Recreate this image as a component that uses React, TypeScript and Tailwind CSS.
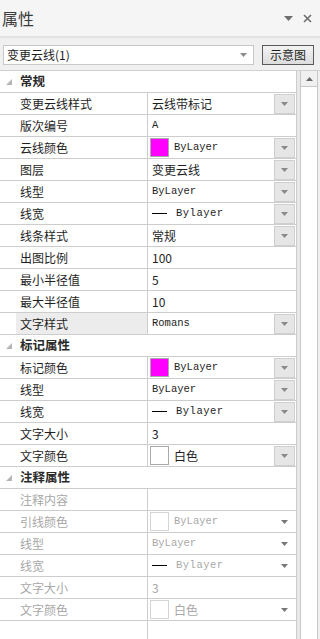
import React from "react";

type Kind = "text" | "drop" | "color" | "line";

type Row = {
  label: string;
  value?: string;
  kind?: Kind;
  color?: string;
  mono?: boolean;
  selected?: boolean;
};

type Section = {
  title: string;
  disabled?: boolean;
  rows: Row[];
};

const sections: Section[] = [
  {
    title: "常规",
    rows: [
      { label: "变更云线样式", value: "云线带标记", kind: "drop" },
      { label: "版次编号", value: "A", kind: "text", mono: true },
      { label: "云线颜色", value: "ByLayer", kind: "color", color: "#ff00ff", mono: true },
      { label: "图层", value: "变更云线", kind: "drop" },
      { label: "线型", value: "ByLayer", kind: "drop", mono: true },
      { label: "线宽", value: "Bylayer", kind: "line", mono: true },
      { label: "线条样式", value: "常规", kind: "drop" },
      { label: "出图比例", value: "100", kind: "text" },
      { label: "最小半径值", value: "5", kind: "text" },
      { label: "最大半径值", value: "10", kind: "text" },
      { label: "文字样式", value: "Romans", kind: "drop", mono: true, selected: true },
    ],
  },
  {
    title: "标记属性",
    rows: [
      { label: "标记颜色", value: "ByLayer", kind: "color", color: "#ff00ff", mono: true },
      { label: "线型", value: "ByLayer", kind: "drop", mono: true },
      { label: "线宽", value: "Bylayer", kind: "line", mono: true },
      { label: "文字大小", value: "3", kind: "text" },
      { label: "文字颜色", value: "白色", kind: "color", color: "#ffffff" },
    ],
  },
  {
    title: "注释属性",
    disabled: true,
    rows: [
      { label: "注释内容", value: "", kind: "text" },
      { label: "引线颜色", value: "ByLayer", kind: "color", color: "#ffffff", mono: true },
      { label: "线型", value: "ByLayer", kind: "drop", mono: true },
      { label: "线宽", value: "Bylayer", kind: "line", mono: true },
      { label: "文字大小", value: "3", kind: "text" },
      { label: "文字颜色", value: "白色", kind: "color", color: "#ffffff" },
    ],
  },
];

const Arrow = ({ up = false, className = "" }: { up?: boolean; className?: string }) => (
  <svg width="7" height="4" viewBox="0 0 7 4" className={className}>
    {up ? <path d="M0 4 L3.5 0 L7 4 Z" fill="currentColor" /> : <path d="M0 0 H7 L3.5 4 Z" fill="currentColor" />}
  </svg>
);

const DropButton = ({ disabled }: { disabled?: boolean }) =>
  disabled ? (
    <div className="w-[21px] h-[20px] flex items-center justify-center text-[#777]">
      <Arrow />
    </div>
  ) : (
    <div className="w-[21px] h-[20px] flex items-center justify-center bg-[#e6e6e6] border border-[#cfcfcf] text-[#8a8a8a]">
      <Arrow />
    </div>
  );

const PropRow = ({ row, disabled }: { row: Row; disabled?: boolean }) => {
  const textColor = disabled ? "text-[#a8a8a8]" : "text-[#1e1e1e]";
  const valueFont = row.mono ? "font-['Liberation_Mono',monospace] text-[10.5px]" : "text-[12px]";
  const hasDrop = row.kind === "drop" || row.kind === "color" || row.kind === "line";

  return (
    <div className="flex h-[22px] border-b border-[#cdcdcd]">
      <div className="w-[16px] shrink-0" />
      <div
        className={`w-[132px] shrink-0 flex items-center pl-[4px] border-r border-[#cdcdcd] text-[12px] ${textColor} ${
          row.selected ? "bg-[#ececec]" : ""
        }`}
      >
        {row.label}
      </div>
      <div className={`flex-1 flex items-center pl-[2px] pr-[1px] ${textColor}`}>
        <div className="flex-1 flex items-center min-w-0">
          {row.kind === "color" && (
            <div
              className={`w-[19px] h-[19px] mr-[5px] border ${disabled ? "border-[#d4d4d4]" : "border-[#a9a9a9]"}`}
              style={{ backgroundColor: row.color }}
            />
          )}
          {row.kind === "line" && (
            <div className="w-[16px] h-[19px] ml-[2px] mr-[8px] flex items-center bg-white">
              <div className="w-[15px] h-[1px] bg-black" />
            </div>
          )}
          <span
            className={`${row.kind === "color" || row.kind === "line" ? "" : "pl-[2px]"} ${valueFont} ${
              row.kind === "line" ? "tracking-[0.5px]" : ""
            } whitespace-nowrap`}
          >
            {row.value}
          </span>
        </div>
        {hasDrop && <DropButton disabled={disabled} />}
      </div>
    </div>
  );
};

const SectionHeader = ({ title }: { title: string }) => (
  <div className="flex h-[22px] border-b border-[#cdcdcd] items-center">
    <div className="w-[16px] shrink-0 flex items-center justify-center pl-[2px]">
      <svg width="6" height="6" viewBox="0 0 6 6">
        <path d="M6 0 V6 H0 Z" fill="#b5b5b5" />
      </svg>
    </div>
    <div className="pl-[4px] text-[12.5px] font-bold text-[#2a2a2a]">{title}</div>
  </div>
);

export default function App() {
  return (
    <div className="w-[320px] h-[639px] bg-[#f0f0f0] overflow-hidden flex flex-col font-['Noto_Sans_CJK_SC',sans-serif]">
      {/* Title */}
      <div className="h-[36px] flex items-center justify-between pl-[2px] pr-[8px] bg-[#f5f5f5]">
        <span className="text-[16px] text-[#3a3a3a] leading-none">属性</span>
        <div className="flex items-center gap-[10px] text-[#6e6e6e]">
          <svg width="9" height="5" viewBox="0 0 9 5">
            <path d="M0 0 H9 L4.5 5 Z" fill="currentColor" />
          </svg>
          <svg width="9" height="9" viewBox="0 0 9 9">
            <path d="M1 1 L8 8 M8 1 L1 8" stroke="currentColor" strokeWidth="1.6" />
          </svg>
        </div>
      </div>
      <div className="h-[2px] bg-[#e2e2e2]" />

      {/* Combo + button */}
      <div className="flex items-center h-[31px] pl-[3px] pr-[6px] pt-[3px]">
        <div className="w-[251px] h-[20px] bg-white border border-[#c8c8c8] flex items-center pl-[3px] pr-[6px]">
          <span className="flex-1 text-[12px] text-[#1e1e1e]">变更云线(1)</span>
          <Arrow className="text-[#8a8a8a]" />
        </div>
        <div className="ml-auto w-[52px] h-[20px] border border-[#5a5a5a] bg-gradient-to-b from-[#f4f4f4] to-[#dcdcdc] flex items-center justify-center text-[12px] text-[#1e1e1e]">
          示意图
        </div>
      </div>

      {/* Grid */}
      <div className="flex flex-1 mt-[1px] border-t border-[#d0d0d0] bg-white">
        <div className="w-[297px] border-r border-[#cdcdcd] bg-white flex flex-col">
          {sections.map((s) => (
            <div key={s.title}>
              <SectionHeader title={s.title} />
              {s.rows.map((r, i) => (
                <PropRow key={i} row={r} disabled={s.disabled} />
              ))}
            </div>
          ))}
          <div className="flex flex-1">
            <div className="w-[148px] border-r border-[#cdcdcd]" />
          </div>
        </div>
        <div className="w-[3px] bg-[#e8e8e8]" />
        <div className="w-[18px] border-l border-r border-[#c8c8c8] bg-white flex flex-col">
          <div className="h-[16px] bg-[#f0f0f0] border-b border-[#c8c8c8] flex items-center justify-center text-[#6a6a6a]">
            <Arrow up />
          </div>
        </div>
        <div className="flex-1 bg-[#f0f0f0]" />
      </div>
    </div>
  );
}
